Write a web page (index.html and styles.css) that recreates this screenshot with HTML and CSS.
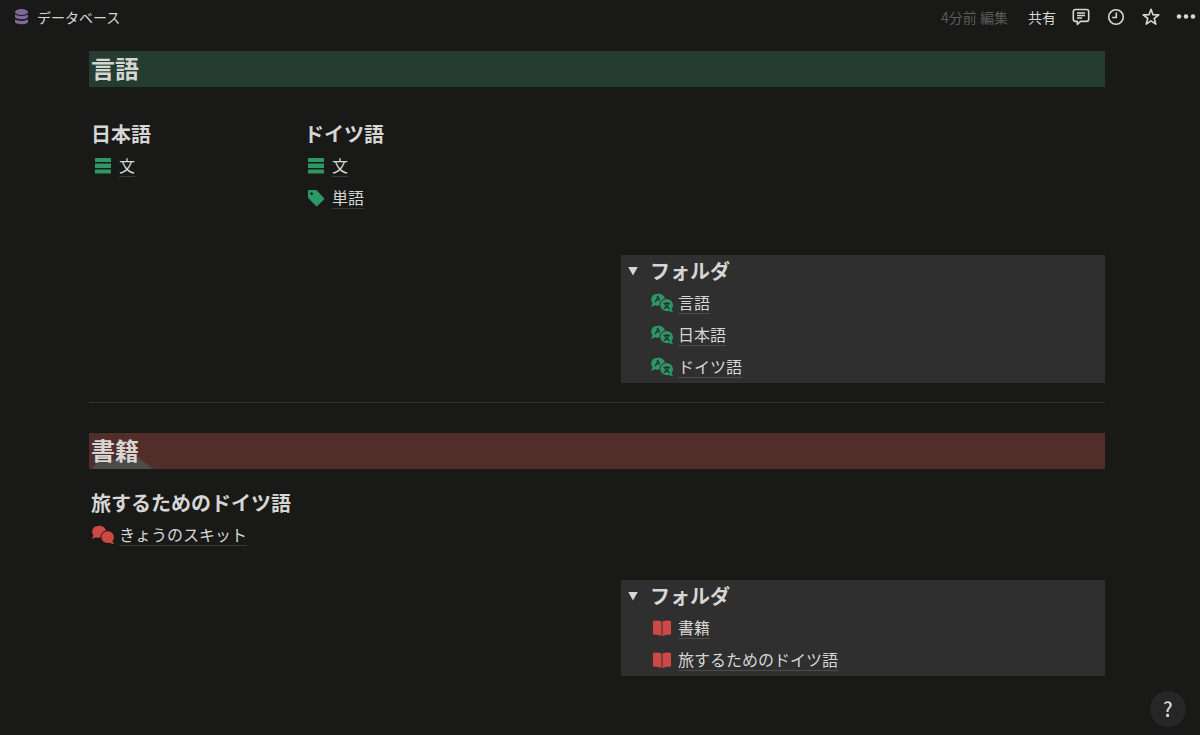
FILE: index.html
```html
<!DOCTYPE html>
<html lang="ja">
<head>
  <meta charset="UTF-8">
  <title>データベース</title>
  <meta name="viewport" content="width=device-width, initial-scale=1.0">
  <link rel="stylesheet" href="styles.css">
</head>
<body>

<svg class="sprite" aria-hidden="true">
  <symbol id="rows" viewBox="0 0 24 20">
    <path d="M4 2h16v4H4zM4 7.500h16v4.500H4zM4 13.500h16v4H4z"/>
  </symbol>
  <symbol id="tag" viewBox="0 0 24 20">
    <path fill-rule="evenodd" d="M4 3q0-1 1-1h6.500q.8 0 1.400.6L20 10q.6.700 0 1.400L13.400 18q-.7.600-1.400 0L4.600 10.600Q4 10 4 9zM7.600 4.300a1.300 1.300 0 1 0 .01 0z"/>
  </symbol>
  <symbol id="talk" viewBox="0 0 24 20">
    <path d="M8.200 .8C12 .8 14.600 3 14.900 5.800 11.500 6.600 9.300 9.400 9.600 12.600 8 12.900 6.300 12.800 4.900 12.200 3.500 13.100 2 13.500 .8 13.400 1.600 12.400 2.200 11.300 2.400 10.200-.4 6.600 1.800 .8 8.200 .8z"/>
    <path d="M16.700 6.200c3.700 0 6.200 2.600 6.200 5.900 0 1.500-.5 2.800-1.400 3.900.2 1.100.8 2 1.500 2.900-1.500.1-2.900-.4-4.200-1.200-4.500 1.200-8.400-1.300-8.400-5.600 0-3.300 2.600-5.900 6.300-5.900z"/>
  </symbol>
  <symbol id="language" viewBox="0 0 24 20">
    <use href="#talk"/>
    <path class="cut" d="M5.200 9.200l2.600-5.700L9.700 7M6.300 7.100h2.900M13.400 10.400h6.600M16.700 8.900v1.500M18.800 10.600q-1.300 3.500-5.200 5M14.600 10.600q1.300 3.500 5.200 5"/>
  </symbol>
  <symbol id="book" viewBox="0 0 24 20">
    <path d="M3 3q4.500-1 8.500.5v14.500Q7.500 16 3 16.500zM12.500 3.500Q16.500 2 21 3v13.500q-4.500-.5-8.500 1.500z"/>
  </symbol>
</svg>

<header class="topbar">
  <a class="crumb" href="#">
    <svg class="crumb-icon" viewBox="0 0 14 16" aria-hidden="true">
      <ellipse cx="7" cy="3" rx="6.500" ry="3"/>
      <path d="M.5 5.300c2.600 2.300 10.400 2.300 13 0v2.200c0 3.700-13 3.700-13 0zM.5 10.300c2.600 2.300 10.400 2.300 13 0v2.200c0 3.700-13 3.700-13 0z"/>
    </svg>
    <span>データベース</span>
  </a>
  <div class="actions">
    <span class="edited">4分前 編集</span>
    <button class="share" type="button">共有</button>
    <button type="button" aria-label="コメント">
      <svg viewBox="0 0 20 20"><path d="M4.500 2.500h11q2.200 0 2.200 2.200v7.500q0 2.200-2.200 2.200H9.500L6.300 17.300v-2.900H4.500q-2.200 0-2.200-2.200V4.700q0-2.200 2.200-2.200z"/><path class="thin" d="M6 6h8M6 8.500h8M6 11h5"/></svg>
    </button>
    <button type="button" aria-label="更新履歴">
      <svg viewBox="0 0 20 20"><circle cx="10" cy="10" r="7.300"/><path d="M10.300 5.500v5H6.200"/></svg>
    </button>
    <button type="button" aria-label="お気に入り">
      <svg viewBox="0 0 20 20"><path d="M10 2.200l2 5.500 5.800.2-4.600 3.600 1.600 5.600-4.800-3.200-4.800 3.200 1.600-5.600L2.200 7.900 8 7.700z"/></svg>
    </button>
    <button type="button" aria-label="その他">
      <svg class="dots" viewBox="0 0 20 20"><circle cx="3" cy="9.500" r="2.300"/><circle cx="10" cy="9.500" r="2.300"/><circle cx="17" cy="9.500" r="2.300"/></svg>
    </button>
  </div>
</header>

<main>
  <section>
    <h1 class="green">言語</h1>
    <div class="columns languages">
      <div class="column">
        <h2>日本語</h2>
        <a class="page green-icon" href="#"><svg><use href="#rows"/></svg><span>文</span></a>
      </div>
      <div class="column">
        <h2>ドイツ語</h2>
        <a class="page green-icon" href="#"><svg><use href="#rows"/></svg><span>文</span></a>
        <a class="page green-icon" href="#"><svg><use href="#tag"/></svg><span>単語</span></a>
      </div>
    </div>
    <details class="folder" open>
      <summary><h2>フォルダ</h2></summary>
      <a class="page green-icon" href="#"><svg><use href="#language"/></svg><span>言語</span></a>
      <a class="page green-icon" href="#"><svg><use href="#language"/></svg><span>日本語</span></a>
      <a class="page green-icon" href="#"><svg><use href="#language"/></svg><span>ドイツ語</span></a>
    </details>
  </section>

  <hr>

  <section>
    <h1 class="red"><span>書籍</span></h1>
    <div class="columns books">
      <div class="column">
        <h2>旅するためのドイツ語</h2>
        <a class="page red-icon" href="#"><svg><use href="#talk"/></svg><span>きょうのスキット</span></a>
      </div>
    </div>
    <details class="folder" open>
      <summary><h2>フォルダ</h2></summary>
      <a class="page red-icon" href="#"><svg><use href="#book"/></svg><span>書籍</span></a>
      <a class="page red-icon" href="#"><svg><use href="#book"/></svg><span>旅するためのドイツ語</span></a>
    </details>
  </section>
</main>

<button class="help" type="button" aria-label="ヘルプ">?</button>

</body>
</html>
```

FILE: styles.css
```css
* {
  box-sizing: border-box;
}
body {
  margin: 0;
  background-color: #191917;
  color: #d6d6d5;
  font-family: "Noto Sans CJK JP", sans-serif;
  font-size: 16px;
}
a {
  color: inherit;
  text-decoration: none;
}
button {
  padding: 0;
  border: none;
  background: none;
  color: inherit;
  font-family: inherit;
  cursor: pointer;
}
.sprite {
  display: none;
}

/* top bar */
.topbar {
  display: flex;
  justify-content: space-between;
  align-items: center;
  height: 33px;
  padding: 0 4px 0 14px;
  font-size: 14px;
}
.crumb {
  display: flex;
  align-items: center;
  gap: 8px;
}
.crumb-icon {
  width: 15px;
  height: 16px;
  fill: #80689a;
}
.actions {
  display: flex;
  align-items: center;
  gap: 15px;
}
.edited {
  margin-right: 5px;
  color: #5b5b59;
}
.actions .share {
  font-size: 14px;
}
.actions svg {
  display: block;
  width: 20px;
  height: 20px;
  fill: none;
  stroke: #d6d6d5;
  stroke-width: 1.6;
  stroke-linejoin: round;
}
.actions .thin {
  stroke-width: 1.3;
}
.actions .dots {
  fill: #d6d6d5;
  stroke: none;
}

/* page */
main {
  padding: 18px 95px 60px 89px;
}
h1, h2 {
  margin: 0;
  font-weight: bold;
}
h1 {
  height: 36px;
  padding-left: 2px;
  font-size: 24px;
  line-height: 34px;
}
h2 {
  padding-left: 2px;
  font-size: 20px;
  line-height: 32px;
}
.green {
  background-color: #243d30;
}
.red {
  position: relative;
  background-color: #522e2a;
}
/* grey wedge along the foot of the banner */
.red::before {
  content: "";
  position: absolute;
  left: 2px;
  bottom: 0;
  width: 62px;
  height: 12px;
  background-color: #4d4b4a;
  clip-path: polygon(0 100%, 12% 40%, 75% 0, 100% 100%);
}
.red span {
  position: relative;
}
.columns {
  display: grid;
  grid-template-columns: 213px 1fr;
}
.languages {
  margin: 31px 0 41px;
}
.books {
  grid-template-columns: 1fr;
  margin: 18px 0 29px;
}
.page {
  display: flex;
  align-items: center;
  height: 32px;
  padding-left: 2px;
}
.page svg {
  width: 24px;
  height: 20px;
  margin-right: 4px;
}
.page span {
  height: 22px;
  border-bottom: 1px solid #373735;
  line-height: 20px;
}
.green-icon svg {
  fill: #2c9965;
}
.red-icon svg {
  fill: #cd4945;
}
.cut {
  fill: none;
  stroke: #2f2f2f;
  stroke-width: 1.3;
}
hr {
  height: 1px;
  margin: 19px 0 30px;
  border: none;
  background-color: #313130;
}

/* toggle list */
.folder {
  width: calc(50% - 24px);
  margin-left: auto;
  padding-left: 27px;
  background-color: #2f2f2f;
}
.folder summary {
  display: flex;
  align-items: center;
  margin-left: -20px;
  list-style: none;
  cursor: pointer;
}
.folder summary::before {
  content: "";
  width: 10px;
  height: 9px;
  margin-right: 10px;
  background-color: #d6d6d5;
  clip-path: polygon(0 0, 100% 0, 50% 100%);
}
.folder .page span {
  border-bottom-color: #4c4c4b;
}

.help {
  position: fixed;
  right: 14px;
  bottom: 8px;
  width: 36px;
  height: 36px;
  border-radius: 50%;
  background-color: #262626;
  font-size: 20px;
  font-weight: 500;
  line-height: 36px;
}
```
